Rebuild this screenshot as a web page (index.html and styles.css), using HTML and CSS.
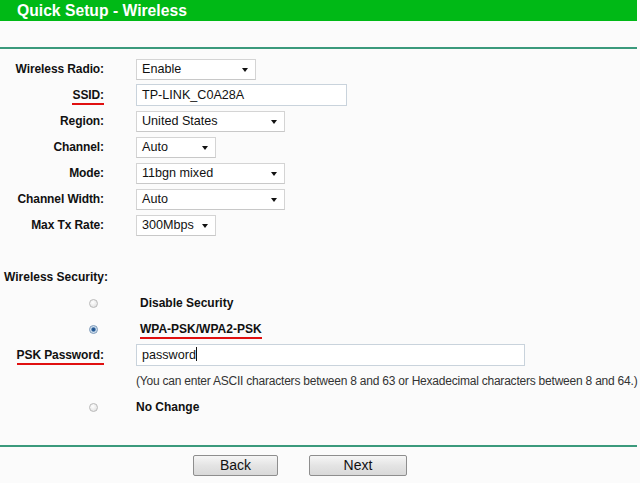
FILE: index.html
```html
<!DOCTYPE html>
<html>
<head>
<meta charset="utf-8">
<link rel="stylesheet" href="styles.css">
</head>
<body>
<div class="page">
  <div class="header">Quick Setup - Wireless</div>
  <div class="rule top-rule"></div>

  <div class="form">
    <div class="row">
      <div class="label">Wireless Radio:</div>
      <div class="select w-enable">Enable<span class="arrow"></span></div>
    </div>
    <div class="row">
      <div class="label"><span class="mark">SSID:</span></div>
      <div class="input w-ssid">TP-LINK_C0A28A</div>
    </div>
    <div class="row">
      <div class="label">Region:</div>
      <div class="select w-wide">United States<span class="arrow"></span></div>
    </div>
    <div class="row">
      <div class="label">Channel:</div>
      <div class="select w-short">Auto<span class="arrow"></span></div>
    </div>
    <div class="row">
      <div class="label">Mode:</div>
      <div class="select w-wide">11bgn mixed<span class="arrow"></span></div>
    </div>
    <div class="row">
      <div class="label">Channel Width:</div>
      <div class="select w-wide">Auto<span class="arrow"></span></div>
    </div>
    <div class="row">
      <div class="label">Max Tx Rate:</div>
      <div class="select w-short">300Mbps<span class="arrow"></span></div>
    </div>

    <div class="row section">
      <div class="section-label">Wireless Security:</div>
    </div>
    <div class="row">
      <div class="label radio-cell"><span class="radio"></span></div>
      <div class="option indent">Disable Security</div>
    </div>
    <div class="row">
      <div class="label radio-cell"><span class="radio checked"></span></div>
      <div class="option indent"><span class="mark">WPA-PSK/WPA2-PSK</span></div>
    </div>
    <div class="row">
      <div class="label"><span class="mark">PSK Password:</span></div>
      <div class="input w-psk">password<span class="caret"></span></div>
    </div>
    <div class="row">
      <div class="label"></div>
      <div class="hint">(You can enter ASCII characters between 8 and 63 or Hexadecimal characters between 8 and 64.)</div>
    </div>
    <div class="row">
      <div class="label radio-cell"><span class="radio"></span></div>
      <div class="option">No Change</div>
    </div>
  </div>

  <div class="rule bottom-rule"></div>
  <div class="buttons">
    <div class="btn btn-back">Back</div>
    <div class="btn btn-next">Next</div>
  </div>
</div>
</body>
</html>
```

FILE: styles.css
```css
html, body {
  margin: 0;
  padding: 0;
  background: #fbfbfb;
}
body {
  font-family: "Liberation Sans", Arial, sans-serif;
  color: #111;
  width: 640px;
  height: 483px;
  overflow: hidden;
}
.page {
  display: flex;
  flex-direction: column;
}
.header {
  width: 620px;
  height: 21px;
  line-height: 21px;
  padding-left: 17px;
  background: #00b916;
  color: #fff;
  font-weight: bold;
  font-size: 15.7px;
}
.rule {
  width: 637px;
  height: 2px;
  background: #3b9a7c;
}
.top-rule {
  margin-top: 26px;
}
.form {
  display: flex;
  flex-direction: column;
  margin-top: 7px;
}
.row {
  display: flex;
  align-items: center;
  height: 26px;
}
.label {
  width: 104px;
  flex: none;
  margin-right: 32px;
  text-align: right;
  font-weight: bold;
  font-size: 12px;
  letter-spacing: -0.1px;
}
.mark {
  display: inline-block;
  padding-bottom: 1px;
  border-bottom: 2px solid #e01010;
  margin-bottom: -3px;
}
.select, .input {
  position: relative;
  box-sizing: border-box;
  height: 21px;
  line-height: 19px;
  padding-left: 5px;
  background: #fff;
  border: 1px solid #d4d4d4;
  border-bottom-color: #c8c8c8;
  font-size: 12.6px;
  color: #111;
}
.input {
  height: 22px;
  line-height: 20px;
  border-color: #c9d3dc;
}
.w-enable { width: 120px; }
.w-ssid { width: 211px; }
.w-wide { width: 149px; }
.w-short { width: 80px; }
.w-psk { width: 389px; }
.arrow {
  position: absolute;
  right: 7px;
  top: 8px;
  width: 0;
  height: 0;
  border-left: 3.5px solid transparent;
  border-right: 3.5px solid transparent;
  border-top: 4px solid #111;
}
.caret {
  display: inline-block;
  width: 1px;
  height: 14px;
  background: #111;
  vertical-align: -2px;
}
.section {
  margin-top: 26px;
}
.section-label {
  padding-left: 4px;
  font-weight: bold;
  font-size: 12px;
}
.radio-cell {
  display: flex;
  justify-content: flex-end;
  padding-right: 6px;
  box-sizing: border-box;
}
.radio {
  display: block;
  width: 9px;
  height: 9px;
  border-radius: 50%;
  box-sizing: border-box;
  border: 1px solid #b9b9b9;
  background: radial-gradient(circle at 40% 35%, #ffffff 0%, #e6e6e6 70%, #d2d2d2 100%);
}
.radio.checked {
  border-color: #7a98b8;
  background: radial-gradient(circle, #1d4f8a 0, #2a5f9a 1.6px, #c9d9ea 2.6px, #eef3f8 100%);
}
.option {
  font-weight: bold;
  font-size: 12px;
}
.option.indent {
  padding-left: 4px;
}
.hint {
  font-size: 12px;
  letter-spacing: -0.22px;
  color: #333;
  white-space: nowrap;
}
.bottom-rule {
  margin-top: 25px;
}
.buttons {
  display: flex;
  gap: 31px;
  padding-left: 193px;
  margin-top: 8px;
}
.btn {
  box-sizing: border-box;
  height: 21px;
  line-height: 19px;
  text-align: center;
  font-size: 14px;
  color: #111;
  border: 1px solid #8e8e8e;
  border-radius: 2px;
  background: linear-gradient(#f6f6f6, #e4e4e4 50%, #d9d9d9);
}
.btn-back { width: 85px; }
.btn-next { width: 98px; }
```
